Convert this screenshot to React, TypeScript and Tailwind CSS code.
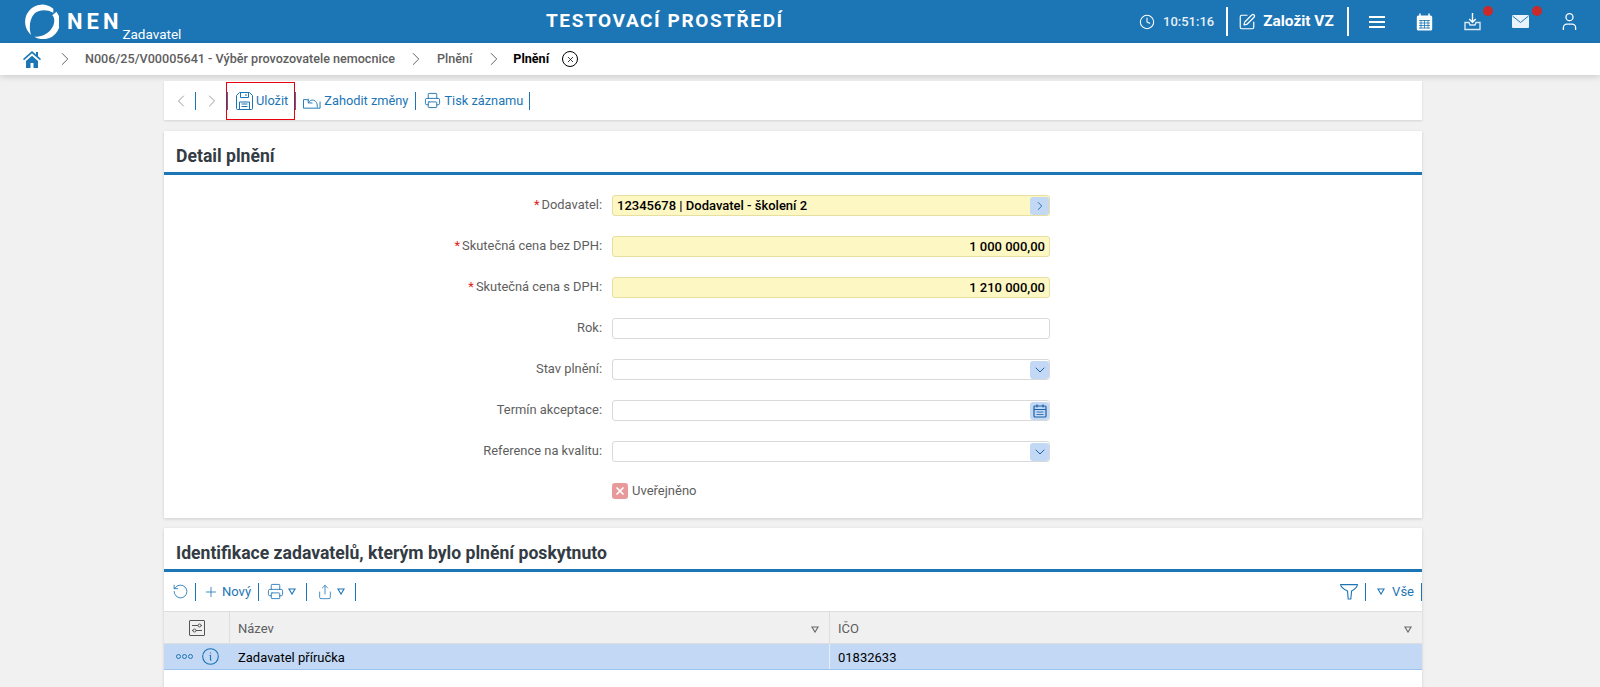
import {
  ChevronDown,
  ChevronLeft,
  ChevronRight,
  Clock,
  Plus,
  Printer,
  RotateCcw,
  Share,
  SquarePen,
  User,
  X,
} from "lucide-react";

function Sep({ className = "" }: { className?: string }) {
  return <span className={`h-[18px] w-px shrink-0 bg-[#1c75b5] ${className}`} />;
}

function Tri({ className = "text-[#1c75b5]" }: { className?: string }) {
  return (
    <svg width="8" height="7" viewBox="0 0 9 8" fill="none" stroke="currentColor" strokeWidth="1.2" className={className}>
      <path d="M1 1.2h7L4.500 7z" />
    </svg>
  );
}

function Logo() {
  return (
    <svg width="34" height="35" viewBox="0 0 33 34" fill="#fff">
      <path d="M27.500 4.500A16.500 16.500 0 0 0 6 30C3.500 24 4.500 14 9 9.500 13 5.500 21 4.800 27.500 8.500z" />
      <path d="M30.500 7.500A16.500 16.500 0 0 1 9 31.800C13 32 20 31 25 25 29 20 29.500 14 26.500 11z" />
    </svg>
  );
}

function SaveIcon() {
  return (
    <svg width="17" height="18" viewBox="0 0 17 18" fill="none" stroke="currentColor" strokeWidth="1" className="ml-[8px]">
      <path d="M3.500.5h10l3 3v13a1 1 0 0 1-1 1h-14a1 1 0 0 1-1-1V3.500z" />
      <path d="M4.500.5v5h8v-5M10 2v2M3.500 17.500v-7.500h10v7.500M5.500 12h6M5.500 14.500h6" />
    </svg>
  );
}

function DiscardIcon() {
  return (
    <svg width="18" height="14" viewBox="0 0 19 14" fill="none" stroke="currentColor" strokeWidth="1" className="ml-[7px] mt-[3px]">
      <path d="M.500 4.500h4l1.500 1M.500 4.500v9h17.500v-7" />
      <path d="M15 13c.5-4-1-8-5-8-2 0-3 1-4 2.500M5.500 3.500v4.500h4.500" />
    </svg>
  );
}

function CalendarWhite() {
  return (
    <svg width="17" height="18" viewBox="0 0 17 18" className="ml-[31px]">
      <rect x="0.800" y="2.500" width="15.400" height="15" rx="1.500" fill="#fff" />
      <path d="M4 .5v3M13 .5v3" stroke="#fff" strokeWidth="1.500" />
      <path d="M3 7.500h11M3 10h11M3 12.500h11M3 15h11M5 7v8.500M8.500 7v8.500M12 7v8.500" stroke="#1c75b5" strokeWidth="0.800" />
    </svg>
  );
}

function TrayDownload() {
  return (
    <svg width="17" height="18" viewBox="0 0 17 18" fill="none" stroke="#fff" strokeWidth="1.400">
      <path d="M8.500 0v9M5.200 6l3.300 3.300L11.800 6" />
      <path d="M5 9.500H1v7h15v-7h-4l-1 2.500H6z" stroke="#d9e8f6" />
    </svg>
  );
}

function MailFilled() {
  return (
    <svg width="17" height="13" viewBox="0 0 17 13">
      <rect width="17" height="13" rx="1" fill="#eaf3fb" />
      <path d="M.5 1l8 6.500 8-6.500" fill="none" stroke="#1c75b5" strokeWidth="1" />
    </svg>
  );
}

function Funnel() {
  return (
    <svg width="18" height="16" viewBox="0 0 18 16" fill="none" stroke="currentColor" strokeWidth="1.100" className="ml-auto">
      <path d="M.6.6h16.800c0 2.500-3 5-5.800 6.500L10.800 15H8.200L7.500 7.100C4.500 5.600.6 3.100.6.600z" />
    </svg>
  );
}

function Field({
  label,
  required,
  value,
  yellow,
  bold,
  right,
  addon,
}: {
  label: string;
  required?: boolean;
  value?: string;
  yellow?: boolean;
  bold?: boolean;
  right?: boolean;
  addon?: "next" | "down" | "cal";
}) {
  return (
    <div className="flex h-[21px] items-center">
      <div className="mb-[2px] w-[448px] shrink-0 pr-[10px] text-right text-[12.9px] text-[#5e5e5e]">
        {required && <span className="mr-[2px] text-[#d22]">*</span>}
        {label}:
      </div>
      <div
        className={`flex h-[21px] w-[438px] items-center justify-between rounded-[3px] border pl-[4px] text-[13px] text-black ${
          yellow ? "border-[#e6dfa0] bg-[#fdf7c3]" : "border-[#d9d9d9] bg-white"
        } ${bold ? "font-medium" : ""}`}
      >
        <span className={right ? "w-full pr-[4px] text-right" : ""}>{value}</span>
        {addon && (
          <span className="flex h-[18px] w-[19px] shrink-0 items-center justify-center rounded-[3px] bg-[#c2d8f5] text-[#1c5fa5]">
            {addon === "next" && <ChevronRight size={14} strokeWidth={1.5} />}
            {addon === "down" && <ChevronDown size={16} strokeWidth={1.5} />}
            {addon === "cal" && (
              <svg width="14" height="14" viewBox="0 0 14 14" fill="none" stroke="currentColor" strokeWidth="1.200">
                <rect x="1" y="2" width="12" height="11" rx="1" />
                <path d="M1 5.500h12M4 .5v3M10 .5v3" />
                <path d="M3.500 8h7M3.500 10.500h7" strokeWidth="0.800" />
              </svg>
            )}
          </span>
        )}
      </div>
    </div>
  );
}

export default function App() {
  return (
    <div className="h-[687px] overflow-hidden bg-[#f1f1f1] font-['Roboto',sans-serif]">
      {/* top bar */}
      <header className="flex h-[43px] items-center bg-[#1c75b5] text-white">
        <div className="ml-[25px] flex w-[521px] shrink-0 items-center">
          <Logo />
          <span className="ml-[8px] text-[22px] font-bold tracking-[4px]">NEN</span>
          <span className="ml-0 mt-[26px] text-[13.5px]">Zadavatel</span>
        </div>
        <div className="w-[237px] shrink-0 whitespace-nowrap text-center text-[19px] font-bold tracking-[1.600px]">
          TESTOVACÍ PROSTŘEDÍ
        </div>
        <div className="ml-[356px] flex items-center whitespace-nowrap">
          <Clock size={16} strokeWidth={1.6} />
          <span className="ml-[8px] text-[13px] font-medium text-[#e6f0f8]">10:51:16</span>
          <span className="ml-[12px] h-[29px] w-[2px] bg-white" />
          <SquarePen size={18} strokeWidth={1.6} className="ml-[10px]" />
          <span className="ml-[7px] text-[15.4px] font-bold">Založit VZ</span>
          <span className="ml-[13px] h-[29px] w-[2px] bg-white" />
          <span className="ml-[20px] flex w-[16px] flex-col gap-[3px]">
            <span className="h-[2px] bg-white" />
            <span className="h-[2px] bg-white" />
            <span className="h-[2px] bg-white" />
          </span>
          <CalendarWhite />
          <span className="relative ml-[31px]">
            <TrayDownload />
            <span className="absolute left-[19px] top-[-7px] size-[10px] rounded-full bg-[#c92a2a]" />
          </span>
          <span className="relative ml-[31px]">
            <MailFilled />
            <span className="absolute left-[20px] top-[-9px] size-[10px] rounded-full bg-[#c92a2a]" />
          </span>
          <User size={21} strokeWidth={1.5} className="ml-[30px]" />
        </div>
      </header>

      {/* breadcrumb */}
      <nav className="relative flex h-[32px] items-center whitespace-nowrap bg-white text-[12.6px] font-medium text-[#5e5e5e] shadow-[0_2px_6px_rgba(0,0,0,0.15)]">
        <svg width="18" height="17" viewBox="0 0 18 17" className="ml-[23px] text-[#1c75b5]" fill="currentColor">
          <path d="M9 0 0 8l1 1.200L9 2.200l8 7L18 8 15 5.300V1h-2v2.500zM3 10v7h4.500v-5h3v5H15v-7L9 4.800z" />
        </svg>
        <ChevronRight size={22} strokeWidth={1} className="ml-[13px] text-[#555]" />
        <span className="ml-[9px]">N006/25/V00005641 - Výběr provozovatele nemocnice</span>
        <ChevronRight size={22} strokeWidth={1} className="ml-[10px] text-[#555]" />
        <span className="ml-[10px]">Plnění</span>
        <ChevronRight size={22} strokeWidth={1} className="ml-[11px] text-[#555]" />
        <span className="ml-[8px] font-bold text-black">Plnění</span>
        <span className="ml-[13px] flex size-[16px] items-center justify-center rounded-full border border-black text-black">
          <X size={9} strokeWidth={2} />
        </span>
      </nav>

      <main className="ml-[164px] flex w-[1258px] flex-col pt-[6px]">
        {/* toolbar */}
        <div className="relative flex h-[39px] items-center bg-white text-[12.8px] text-[#1c75b5] shadow-[0_1px_2px_rgba(0,0,0,0.12)]">
          <ChevronLeft size={20} strokeWidth={1} className="ml-[7px] text-[#888]" />
          <Sep className="ml-[4px]" />
          <ChevronRight size={20} strokeWidth={1} className="ml-[6px] text-[#888]" />
          <Sep className="ml-[5px]" />
          <SaveIcon />
          <span className="ml-[3px]">Uložit</span>
          <Sep className="ml-[7px]" />
          <DiscardIcon />
          <span className="ml-[3px]">Zahodit změny</span>
          <Sep className="ml-[7px]" />
          <Printer size={17} strokeWidth={1.3} className="ml-[8px]" />
          <span className="ml-[3px]">Tisk záznamu</span>
          <Sep className="ml-[6px]" />
          <span className="absolute left-[62px] top-[1px] h-[38px] w-[69px] border border-[#e8000d]" />
        </div>

        {/* detail */}
        <section className="mt-[11px] h-[387px] bg-white shadow-[0_1px_3px_rgba(0,0,0,0.15)]">
          <h2 className="flex h-[44px] items-end border-b-[3px] border-[#1c75b5] pb-[4px] pl-[12px] text-[17.6px] font-bold leading-[24px] text-[#333b44]">
            Detail plnění
          </h2>
          <div className="flex flex-col gap-[20px] pt-[20px]">
            <Field label="Dodavatel" required value="12345678 | Dodavatel - školení 2" yellow bold addon="next" />
            <Field label="Skutečná cena bez DPH" required value="1 000 000,00" yellow bold right />
            <Field label="Skutečná cena s DPH" required value="1 210 000,00" yellow bold right />
            <Field label="Rok" />
            <Field label="Stav plnění" addon="down" />
            <Field label="Termín akceptace" addon="cal" />
            <Field label="Reference na kvalitu" addon="down" />
            <div className="mt-[-2px] flex h-[21px] items-center pl-[448px] text-[13px] text-[#5e5e5e]">
              <span className="flex size-[16px] items-center justify-center rounded-[3px] bg-[#e89a9a] text-white">
                <X size={12} strokeWidth={3.5} />
              </span>
              <span className="ml-[4px]">Uveřejněno</span>
            </div>
          </div>
        </section>

        {/* identification */}
        <section className="mt-[10px] bg-white shadow-[0_1px_3px_rgba(0,0,0,0.15)]">
          <h2 className="flex h-[44px] items-end border-b-[3px] border-[#1c75b5] pb-[4px] pl-[12px] text-[17.6px] font-bold leading-[24px] text-[#333b44]">
            Identifikace zadavatelů, kterým bylo plnění poskytnuto
          </h2>
          <div className="flex h-[39px] items-center text-[13px] text-[#1c75b5]">
            <RotateCcw size={17} strokeWidth={1.2} className="ml-[8px]" />
            <Sep className="ml-[6px]" />
            <Plus size={16} strokeWidth={1.2} className="ml-[7px]" />
            <span className="ml-[3px]">Nový</span>
            <Sep className="ml-[7px]" />
            <Printer size={17} strokeWidth={1.2} className="ml-[8px]" />
            <Tri className="ml-[4px] text-[#1c75b5]" />
            <Sep className="ml-[10px]" />
            <Share size={16} strokeWidth={1.2} className="ml-[10px]" />
            <Tri className="ml-[4px] text-[#1c75b5]" />
            <Sep className="ml-[10px]" />
            <Funnel />
            <Sep className="ml-[7px]" />
            <Tri className="ml-[11px] text-[#1c75b5]" />
            <span className="ml-[7px]">Vše</span>
            <Sep className="ml-[7px]" />
          </div>
          <div className="flex h-[33px] items-center border-y border-[#dedede] bg-[#f0f0f0] text-[13px] text-[#5e5e5e]">
            <div className="flex h-full w-[66px] items-center justify-center border-r border-[#dedede]">
              <svg width="16" height="16" viewBox="0 0 16 16" fill="none" stroke="#555" strokeWidth="1">
                <rect x="0.500" y="0.500" width="15" height="15" rx="0.500" />
                <path d="M3 5.500h6M12 5.500h1M3 10.500h1M7 10.500h6" />
                <circle cx="10.500" cy="5.500" r="1.500" />
                <circle cx="5.500" cy="10.500" r="1.500" />
              </svg>
            </div>
            <div className="flex h-full w-[600px] items-center justify-between border-r border-[#dedede] pl-[8px] pr-[10px] pt-[3px]">
              <span>Název</span>
              <Tri className="text-[#666]" />
            </div>
            <div className="flex h-full flex-1 items-center justify-between pl-[8px] pr-[10px] pt-[3px]">
              <span>IČO</span>
              <Tri className="text-[#666]" />
            </div>
          </div>
          <div className="flex h-[26px] items-center border-b border-[#9dc3ee] bg-[#c2d8f5] text-[13px] text-black">
            <div className="flex h-full w-[66px] items-center pl-[12px] text-[#1c75b5]">
              <span className="flex gap-[1px]">
                <span className="size-[5px] rounded-full border border-[#1c75b5]" />
                <span className="size-[5px] rounded-full border border-[#1c75b5]" />
                <span className="size-[5px] rounded-full border border-[#1c75b5]" />
              </span>
              <svg width="17" height="17" viewBox="0 0 17 17" fill="none" stroke="currentColor" strokeWidth="1.100" className="ml-[9px]">
                <circle cx="8.500" cy="8.500" r="7.800" />
                <path d="M7.500 7.500h1v4.500h1M8.500 4.500v1" />
              </svg>
            </div>
            <div className="flex h-full w-[600px] items-center border-r border-[#e6eefa] pl-[8px] pt-[2px]">Zadavatel příručka</div>
            <div className="flex-1 pl-[8px] pt-[2px]">01832633</div>
          </div>
          <div className="h-[20px]" />
        </section>
      </main>
    </div>
  );
}
